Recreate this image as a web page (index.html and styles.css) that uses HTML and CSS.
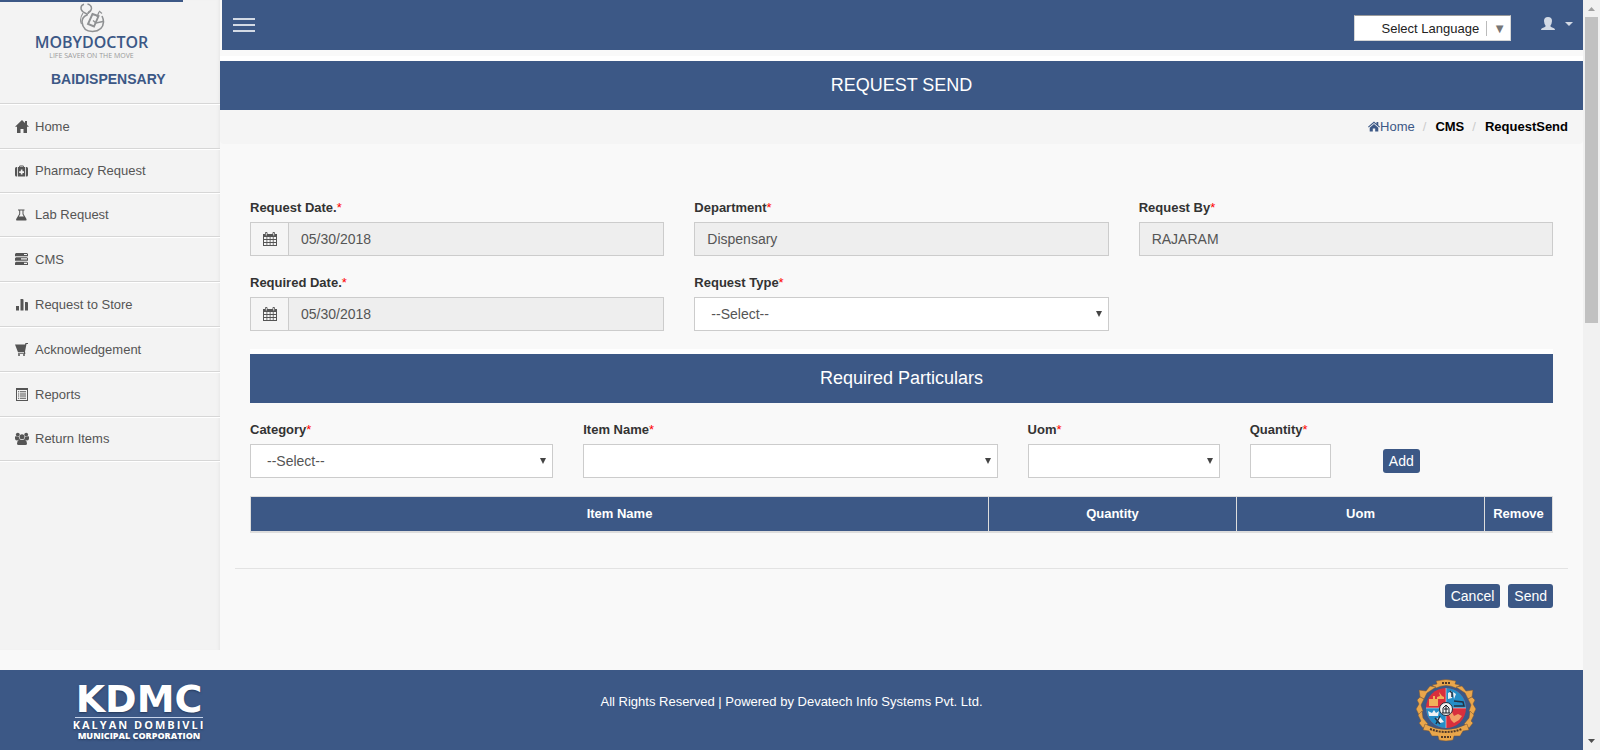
FILE: index.html
```html
<!DOCTYPE html>
<html lang="en">
<head>
<meta charset="utf-8">
<title>Request Send</title>
<link rel="stylesheet" href="styles.css">
</head>
<body>
<div class="page">
  <div class="shell">
    <aside class="sidebar">
      <div class="brand">
        <div class="brand-stripe"></div>
        <div class="brand-logo">
          <svg class="brand-mark" width="26" height="30" viewBox="0 0 26 30" fill="none" stroke="#8f9193">
            <path d="M6 10Q2 8 2 5Q2 2 5 1.200M8.500 1Q12.500 2 12.500 5.500Q12 9 8.500 10.500" stroke-width="1.500"/>
            <path d="M6 10Q9 11.500 8 12Q3 14 3 19Q4 28.500 13.500 28.500Q24 28 24.500 19Q24.500 16 23 13" stroke-width="1.600"/>
            <path d="M4 10Q0 16 2.500 21M20 8L23 10.500M12 7.500Q9 8 9 11" stroke-width="1.100"/>
            <path d="M13.500 11L19.500 13L15 23.500L9 21Z" stroke-width="1.900"/>
            <path d="M24 18.500L17 20L14 17.500M20 9L18 14" stroke-width="1.300"/>
          </svg>
          <span class="brand-name">MOBYDOCTOR</span>
          <span class="brand-tag">LIFE SAVER ON THE MOVE</span>
        </div>
        <strong class="brand-user">BAIDISPENSARY</strong>
      </div>
      <nav class="menu">
        <a class="menu-item tall" href="#">
          <svg class="icon" viewBox="0 0 14 14"><path d="M7 0L0 6.800H2V13H5.500V9H8.500V13H12V6.800H14L12 4.800V1H10V2.900Z"/></svg>Home</a>
        <a class="menu-item" href="#">
          <svg class="icon" viewBox="0 0 14 14"><path fill-rule="evenodd" d="M3 3H4Q4 1.500 5 1.500H8Q9 1.500 9 3H10.200V12.500H3ZM5 3H8V2.500H5ZM5.800 5.500V7.200H4.200V9H5.800V10.600H7.500V9H9V7.200H7.500V5.500Z"/><path d="M2.200 3V12.500H1.500Q0 12.500 0 11V4.500Q0 3 1.500 3ZM11 3H11.700Q13 3 13 4.500V11Q13 12.500 11.700 12.500H11Z"/></svg>Pharmacy Request</a>
        <a class="menu-item" href="#">
          <svg class="icon" viewBox="0 0 14 14"><path fill-rule="evenodd" d="M3 1.500H9.500V2.500H8.500V6L11.500 11Q12 12.500 10.700 12.500H2Q.5 12.500 1.200 11L4.200 6V2.500H3ZM5.200 2.500V6.200L3.900 8.500H8.800L7.500 6.200V2.500Z"/></svg>Lab Request</a>
        <a class="menu-item tall" href="#">
          <svg class="icon" viewBox="0 0 14 14"><path fill-rule="evenodd" d="M1 0H12L13 1V3.300H0V1ZM9 1V2H12V1ZM1 4.300H12L13 5.300V7.700H0V5.300ZM6 5.300V6.500H12V5.300ZM1 8.700H12L13 9.700V12H0V9.700ZM9 9.700V11H12V9.700Z"/></svg>CMS</a>
        <a class="menu-item tall" href="#">
          <svg class="icon" viewBox="0 0 14 14"><path d="M1 8H4V12.500H1ZM5.500 1H7.500Q8.500 1 8.500 2V12.500H5.500ZM10 4H12Q13 4 13 5V12.500H10Z"/></svg>Request to Store</a>
        <a class="menu-item tall" href="#">
          <svg class="icon" viewBox="0 0 14 14"><path d="M0 1.500H10L10.500 0H13V1H11.500L10 8.500L10.300 10.500V11H3V10.200H9V9.300H3Z"/><circle cx="4" cy="12" r="1"/><circle cx="9" cy="12" r="1"/></svg>Acknowledgement</a>
        <a class="menu-item tall" href="#">
          <svg class="icon" viewBox="0 0 14 14"><path fill-rule="evenodd" d="M1 0H13V13H1ZM2 2V12H12V2ZM3 3.200H4.200V4.200H3ZM5 3.200H11V4.200H5ZM3 5.400H4.200V6.400H3ZM5 5.400H11V6.400H5ZM3 7.600H4.200V8.600H3ZM5 7.600H11V8.600H5ZM3 9.800H4.200V10.800H3ZM5 9.800H11V10.800H5Z"/></svg>Reports</a>
        <a class="menu-item" href="#">
          <svg class="icon" viewBox="0 0 14 14"><circle cx="2.800" cy="2.600" r="1.900"/><circle cx="11.200" cy="2.600" r="1.900"/><circle cx="7" cy="4.700" r="2.500"/><path d="M0 4.500Q1 4 3.800 4.800Q4 6.500 5 7.300L2 8.500Q0 8.500 0 6.500ZM14 4.500Q13 4 10.200 4.800Q10 6.500 9 7.300L12 8.500Q14 8.500 14 6.500ZM4.500 7.300Q7 8.800 9.500 7.300Q12 8.500 12 11.500Q12 13 10.500 13H3.500Q2 13 2 11.500Q2 8.500 4.500 7.300Z"/></svg>Return Items</a>
      </nav>
    </aside>

    <div class="main">
      <header class="topbar">
        <button class="burger" type="button" aria-label="Toggle menu"><span></span><span></span><span></span></button>
        <div class="topbar-right">
          <button class="language" type="button"><span class="language-label">Select Language</span><span class="language-arrow">▼</span></button>
          <button class="user" type="button" aria-label="Account">
            <svg width="14" height="14" viewBox="0 0 14 14"><path d="M7 0Q11 0 11 4Q10.800 7 9.500 8.500V9.500Q10 10 13 11.300Q14 12 14 13H0Q0 12 1 11.300Q4 10 4.500 9.500V8.500Q3.200 7 3 4Q3 0 7 0Z"/></svg>
            <svg width="8" height="4" viewBox="0 0 8 4"><path d="M0 0H8L4 4Z"/></svg>
          </button>
        </div>
      </header>

      <h1 class="band page-title">REQUEST SEND</h1>
      <nav class="breadcrumb" aria-label="Breadcrumb">
        <a href="#"><svg width="12" height="11" viewBox="0 0 12 11"><path d="M6 .5L8.500 2.700V1H10.300V4.300L12 5.800L11.300 6.500L6 1.900L.7 6.500L0 5.800ZM6 3L10.300 6.700V10.500H7.200V7.500H4.800V10.500H1.700V6.700Z"/></svg>Home</a>
        <span class="slash">/</span><b>CMS</b><span class="slash">/</span><b>RequestSend</b>
      </nav>

      <form class="content">
        <div class="fields">
          <div class="field third">
            <label for="reqdate">Request Date.<i>*</i></label>
            <div class="date">
              <span class="date-icon"><svg width="14" height="14" viewBox="0 0 14 14"><path fill-rule="evenodd" d="M0 2H2V1Q2 0 3.200 0Q4.500 0 4.500 1V2H9.500V1Q9.500 0 10.700 0Q12 0 12 1V2H14V14H0ZM1 5V7H3.500V5ZM4.300 5V7H6.700V5ZM7.500 5V7H9.800V5ZM10.600 5V7H13V5ZM1 8V10H3.500V8ZM4.300 8V10H6.700V8ZM7.500 8V10H9.800V8ZM10.600 8V10H13V8ZM1 11V13H3.500V11ZM4.300 11V13H6.700V11ZM7.500 11V13H9.800V11ZM10.600 11V13H13V11ZM2.800 1V3.500H3.700V1ZM10.300 1V3.500H11.200V1Z"/></svg></span>
              <input id="reqdate" class="control" type="text" value="05/30/2018" readonly>
            </div>
          </div>
          <div class="field third">
            <label for="dept">Department<i>*</i></label>
            <input id="dept" class="control" type="text" value="Dispensary" readonly>
          </div>
          <div class="field third">
            <label for="reqby">Request By<i>*</i></label>
            <input id="reqby" class="control" type="text" value="RAJARAM" readonly>
          </div>
          <div class="field third">
            <label for="duedate">Required Date.<i>*</i></label>
            <div class="date">
              <span class="date-icon"><svg width="14" height="14" viewBox="0 0 14 14"><path fill-rule="evenodd" d="M0 2H2V1Q2 0 3.200 0Q4.500 0 4.500 1V2H9.500V1Q9.500 0 10.700 0Q12 0 12 1V2H14V14H0ZM1 5V7H3.500V5ZM4.300 5V7H6.700V5ZM7.500 5V7H9.800V5ZM10.600 5V7H13V5ZM1 8V10H3.500V8ZM4.300 8V10H6.700V8ZM7.500 8V10H9.800V8ZM10.600 8V10H13V8ZM1 11V13H3.500V11ZM4.300 11V13H6.700V11ZM7.500 11V13H9.800V11ZM10.600 11V13H13V11ZM2.800 1V3.500H3.700V1ZM10.300 1V3.500H11.200V1Z"/></svg></span>
              <input id="duedate" class="control" type="text" value="05/30/2018" readonly>
            </div>
          </div>
          <div class="field third">
            <label for="reqtype">Request Type<i>*</i></label>
            <div class="select"><select id="reqtype" class="control"><option>--Select--</option></select></div>
          </div>
        </div>

        <h2 class="band">Required Particulars</h2>

        <div class="fields">
          <div class="field quarter">
            <label for="category">Category<i>*</i></label>
            <div class="select"><select id="category" class="control"><option>--Select--</option></select></div>
          </div>
          <div class="field third">
            <label for="item">Item Name<i>*</i></label>
            <div class="select"><select id="item" class="control"></select></div>
          </div>
          <div class="field sixth">
            <label for="uom">Uom<i>*</i></label>
            <div class="select"><select id="uom" class="control"></select></div>
          </div>
          <div class="field twelfth">
            <label for="qty">Quantity<i>*</i></label>
            <input id="qty" class="control" type="text">
          </div>
          <div class="add"><button class="btn" type="button">Add</button></div>
        </div>

        <table class="items">
          <thead><tr><th>Item Name</th><th class="col-mid">Quantity</th><th class="col-mid">Uom</th><th class="col-end">Remove</th></tr></thead>
        </table>

        <div class="actions">
          <button class="btn" type="button">Cancel</button>
          <button class="btn" type="submit">Send</button>
        </div>
      </form>
    </div>
  </div>

  <footer class="footer">
    <div class="kdmc">
      <span class="kdmc-name">KDMC</span>
      <span class="kdmc-city">KALYAN DOMBIVLI</span>
      <span class="kdmc-body">MUNICIPAL CORPORATION</span>
    </div>
    <p class="copyright">All Rights Reserved | Powered by Devatech Info Systems Pvt. Ltd.</p>
    <svg class="emblem" width="60" height="64" viewBox="0 0 60 64">
      <g fill="#e9a64b" stroke="#725337" stroke-width=".5">
        <path d="M20 2Q30-1 40 2L39 5L44 6L40 9Q30 4 20 9L16 6L21 5Z"/>
        <path d="M14 7L20 8L11 14L8 20L4 18L3 11L10 12ZM46 7L40 8L49 14L52 20L56 18L57 11L50 12Z"/>
        <path d="M4 18L8 20L5 26L7 32L3 36L0 30L3 25L1 21ZM56 18L52 20L55 26L53 32L57 36L60 30L57 25L59 21Z"/>
        <path d="M2 36L6 32L7 39L12 45L7 49L3 44L5 42ZM58 36L54 32L53 39L48 45L53 49L57 44L55 42Z"/>
        <path d="M9 45Q30 56 51 45L53 51L47 52L44 57L38 57L37 61Q30 63 23 61L22 57L16 57L13 52L7 51Z"/>
      </g>
      <circle cx="30" cy="29" r="20" fill="#d92f3d"/>
      <path d="M30 29V9A20 20 0 0 1 50 29ZM30 29V49A20 20 0 0 1 10 29Z" fill="#238dc7"/>
      <path d="M30 9V49M10 29H50" stroke="#e7d8df" stroke-width=".6"/>
      <path d="M13 27V20H17V17H19V20H22V27ZM23 13L26 17L28 18V20H21V18L24 17Z" fill="#f2b15a"/>
      <path d="M32 14L36 12V19L32 20ZM37 13L40 15L38 20M12 32L16 34L18 31L20 34L23 32L22 37H13ZM20 40L24 38L28 43L24 44Z" fill="#eef1f4"/>
      <path d="M34 12L36 14V18M38 22L47 23L48 27L38 27M19 39L24 45M24 37L20 45" stroke="#253244" stroke-width="1.500" fill="none"/>
      <path d="M33 36L36 33L38 37L42 35L46 37L43 41L38 44L35 41Z" fill="#f2a067"/>
      <circle cx="30" cy="30" r="6.500" fill="#f2f2f2" stroke="#242b38"/>
      <path d="M27 34V29L30 26L33 29V34M26 34H34M28 30H32M30 27V34" fill="none" stroke="#171b24" stroke-width="1"/>
      <path d="M14 50Q30 56 46 50" fill="none" stroke="#533a28" stroke-width="2" stroke-dasharray="2 1"/>
      <path d="M25 58H35M26 4H34" stroke="#533a28" stroke-width="2" stroke-dasharray="2 1"/>
    </svg>
  </footer>
</div>
<div class="scrollbar" aria-hidden="true">
  <svg width="17" height="17" viewBox="0 0 17 17"><path d="M5 11H12L8.500 7Z" fill="#a0a0a0"/></svg>
  <div class="scrollbar-thumb"></div>
  <svg class="scrollbar-down" width="17" height="17" viewBox="0 0 17 17"><path d="M5 6H12L8.500 10Z" fill="#505050"/></svg>
</div>
</body>
</html>
```

FILE: styles.css
```css
* { box-sizing: border-box; }

body {
  margin: 0;
  min-height: 100vh;
  display: flex;
  background: #f9f9f9;
  color: #333;
  font: 13px/19px "Liberation Sans", Arial, sans-serif;
}

button, input, select { font-family: inherit; }
a { text-decoration: none; }

.page { flex: 1; min-width: 0; display: flex; flex-direction: column; }
.shell { flex: 1; display: flex; padding-bottom: 20px; }

/* Sidebar */
.sidebar {
  flex: 0 0 220px;
  background: #f3f3f3;
  box-shadow: inset -3px 0 3px -2px #e6e6e6;
}
.brand { height: 104px; border-bottom: 1px solid #d6d6d6; }
.brand-stripe { width: 183px; height: 2px; background: #3c5886; }
.brand-logo { width: 183px; display: flex; flex-direction: column; align-items: center; }
.brand-mark { margin-top: 1px; }
.brand-name {
  font: 600 16px/18px "Open Sans", sans-serif;
  color: #3c5886;
}
.brand-tag { font: 7px/10px "Open Sans", sans-serif; color: #999; }
.brand-user {
  display: block;
  margin: 8px 0 0 51px;
  font-size: 14px;
  line-height: 20px;
  color: #3c5886;
}
.menu-item {
  display: flex;
  align-items: center;
  gap: 6px;
  height: 44px;
  padding: 0 0 1px 15px;
  border-top: 1px solid #fff;
  border-bottom: 1px solid #d6d6d6;
  color: #555;
}
.menu-item.tall { height: 45px; padding-bottom: 0; }
.menu::after { content: ""; display: block; height: 1px; background: #fff; }
.icon { width: 14px; height: 14px; fill: #555; }

/* Header */
.main { flex: 1; min-width: 0; }
.topbar {
  height: 50px;
  margin: 0 0 6px 2px;
  padding: 0 10px 0 11px;
  display: flex;
  justify-content: space-between;
  align-items: center;
  background: #3c5886;
}
.burger {
  width: 22px;
  padding: 0;
  border: 0;
  background: none;
  display: grid;
  gap: 4px;
}
.burger span { height: 2px; background: #d3dae5; }
.topbar-right { display: flex; align-items: center; gap: 30px; padding-top: 6px; }
.language {
  height: 26px;
  padding: 0 4px 0 27px;
  display: flex;
  align-items: center;
  gap: 7px;
  border: 1px solid #d5d5d5;
  border-top-color: #9b9b9b;
  background: #fff;
  color: #222;
  font-size: 13px;
}
.language-arrow { padding-left: 6px; border-left: 1px solid #bbb; color: #767676; line-height: 15px; }
.user {
  display: flex;
  align-items: center;
  gap: 10px;
  padding: 0 0 8px;
  border: 0;
  background: none;
  fill: #d3dae5;
}

.band {
  margin: 0;
  border-top: 5px solid #fff;
  background: #3c5886;
  color: #fff;
  font-size: 18px;
  font-weight: 400;
  line-height: 49px;
  text-align: center;
}
.breadcrumb {
  height: 34px;
  padding: 0 15px 2px;
  display: flex;
  justify-content: flex-end;
  align-items: center;
  background: #f5f5f5;
  border-radius: 0 0 4px 4px;
  color: #000;
}
.breadcrumb a { color: #3c5886; display: flex; align-items: center; }
.breadcrumb svg { fill: #3c5886; }
.slash { padding: 0 9px 0 8px; color: #ccc; }

/* Form */
.content { padding: 54px 30px 0; }
.fields { display: grid; grid-template-columns: repeat(12, 1fr); gap: 17px 30px; }
.field { min-width: 0; }
.third { grid-column: span 4; }
.quarter { grid-column: span 3; }
.sixth { grid-column: span 2; }
.twelfth { grid-column: span 1; }
.content .band { margin: 18px 0 17px; }

label { display: block; margin-bottom: 5px; font-weight: 700; }
label i { color: #f00; font-style: normal; font-weight: 400; }
.control {
  display: block;
  width: 100%;
  height: 34px;
  padding: 0 12px;
  border: 1px solid #ccc;
  border-radius: 0;
  background: #fff;
  color: #555;
  font-size: 14px;
}
.control:read-only { background: #eee; }
.select .control { appearance: none; padding: 0 16px; background: #fff; }
.select { position: relative; }
.select::after {
  content: "";
  position: absolute;
  right: 7px;
  top: 14px;
  border: 3px solid transparent;
  border-top: 6px solid #444;
  border-bottom: 0;
}
.date { display: flex; }
.date-icon {
  flex: 0 0 38px;
  display: flex;
  align-items: center;
  justify-content: center;
  border: 1px solid #ccc;
  border-right: 0;
  background: #f5f5f5;
  fill: #555;
}

.btn {
  height: 24px;
  padding: 0 6px;
  border: 0;
  border-radius: 3px;
  background: #3c5886;
  color: #fff;
  font-size: 14px;
}
.add { align-self: end; padding: 0 0 5px 22px; }

.items {
  width: 100%;
  margin-top: 18px;
  table-layout: fixed;
  border-collapse: collapse;
  border: 1px solid #ddd;
  border-bottom-width: 2px;
}
.items th {
  height: 35px;
  padding: 0;
  border-left: 1px solid #ddd;
  background: #3c5886;
  color: #fff;
}
.col-mid { width: 248px; }
.col-end { width: 68px; }

.actions {
  display: flex;
  justify-content: flex-end;
  gap: 8px;
  margin: 35px -15px 0;
  padding: 15px 15px 0;
  border-top: 1px solid #e3e3e3;
}

/* Footer */
.footer {
  height: 80px;
  padding: 0 75px;
  display: grid;
  grid-template-columns: 1fr auto 1fr;
  background: #3c5886;
  color: #fff;
}
.kdmc {
  width: 128px;
  padding-top: 11px;
  display: flex;
  flex-direction: column;
  align-items: center;
  white-space: nowrap;
  text-shadow: 0 1px 2px #26395a;
}
.kdmc-name {
  width: 100%;
  border-bottom: 1px solid #c5d3ea;
  font: 700 38px/36px "DejaVu Sans", Verdana, sans-serif;
  text-align: center;
}
.kdmc-city { font: 700 11px/13px "Open Sans", sans-serif; letter-spacing: 2px; }
.kdmc-body { font: 800 9px/9px "Open Sans", sans-serif; }
.copyright { margin: 22px 0 0; }
.emblem { justify-self: end; margin: 9px 32px 0 0; }

/* Scroll track */
.scrollbar { flex: 0 0 17px; display: flex; flex-direction: column; background: #f1f1f1; }
.scrollbar-thumb { height: 306px; margin: 0 2px; background: #c1c1c1; }
.scrollbar-down { margin-top: auto; }
```
